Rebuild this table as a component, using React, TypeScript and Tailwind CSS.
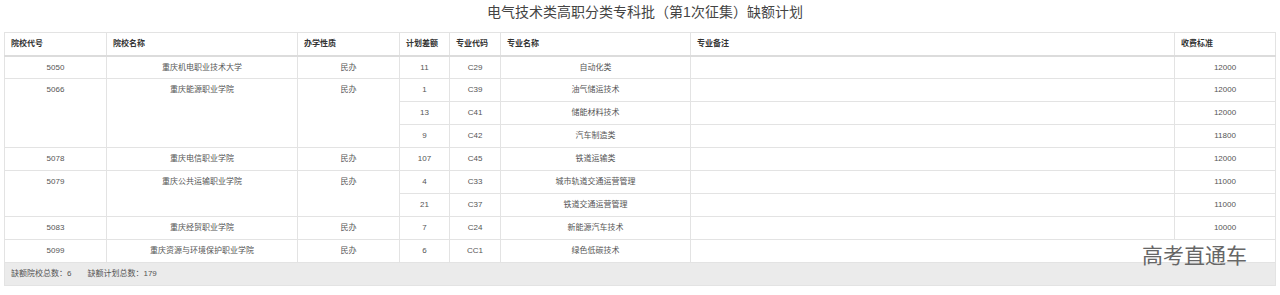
const font = '"Liberation Sans", "Noto Sans CJK SC", sans-serif'

type Major = { gap: string; code: string; name: string; fee: string }
type School = { id: string; name: string; kind: string; majors: Major[] }

const schools: School[] = [
  { id: '5050', name: '重庆机电职业技术大学', kind: '民办', majors: [{ gap: '11', code: 'C29', name: '自动化类', fee: '12000' }] },
  {
    id: '5066',
    name: '重庆能源职业学院',
    kind: '民办',
    majors: [
      { gap: '1', code: 'C39', name: '油气储运技术', fee: '12000' },
      { gap: '13', code: 'C41', name: '储能材料技术', fee: '12000' },
      { gap: '9', code: 'C42', name: '汽车制造类', fee: '11800' },
    ],
  },
  { id: '5078', name: '重庆电信职业学院', kind: '民办', majors: [{ gap: '107', code: 'C45', name: '铁道运输类', fee: '12000' }] },
  {
    id: '5079',
    name: '重庆公共运输职业学院',
    kind: '民办',
    majors: [
      { gap: '4', code: 'C33', name: '城市轨道交通运营管理', fee: '11000' },
      { gap: '21', code: 'C37', name: '铁道交通运营管理', fee: '11000' },
    ],
  },
  { id: '5083', name: '重庆经贸职业学院', kind: '民办', majors: [{ gap: '7', code: 'C24', name: '新能源汽车技术', fee: '10000' }] },
  { id: '5099', name: '重庆资源与环境保护职业学院', kind: '民办', majors: [{ gap: '6', code: 'CC1', name: '绿色低碳技术', fee: '12000' }] },
]

const headers = ['院校代号', '院校名称', '办学性质', '计划差额', '专业代码', '专业名称', '专业备注', '收费标准']
const widths = ['w-[102px]', 'w-[191px]', 'w-[102px]', 'w-[50px]', 'w-[51px]', 'w-[190px]', 'w-[484px]', 'w-[101px]']

const td = 'border border-[#e3e3e3] h-[23px] px-[6px] text-center align-top pt-[6px] leading-[10px]'

export default function App() {
  return (
    <div className="relative w-[1280px] h-[295px] bg-white" style={{ fontFamily: font }}>
      <h1 className="pt-[3px] h-[32px] text-center text-[14px] font-normal leading-[18px] text-[#444] pl-[10px]">
        电气技术类高职分类专科批（第1次征集）缺额计划
      </h1>
      <div className="px-[4px]">
        <table className="w-[1271px] table-fixed border-collapse text-[8px] text-[#555]">
          <colgroup>
            {widths.map((w, i) => (
              <col key={i} className={w} />
            ))}
          </colgroup>
          <thead>
            <tr>
              {headers.map((h) => (
                <th
                  key={h}
                  className="border border-[#e3e3e3] border-b-2 border-b-[#dcdcdc] h-[23px] px-[6px] text-left font-bold text-[#333] leading-[10px]"
                >
                  {h}
                </th>
              ))}
            </tr>
          </thead>
          <tbody>
            {schools.map((s) =>
              s.majors.map((m, i) => (
                <tr key={s.id + m.code}>
                  {i === 0 && (
                    <>
                      <td rowSpan={s.majors.length} className={td}>{s.id}</td>
                      <td rowSpan={s.majors.length} className={td}>{s.name}</td>
                      <td rowSpan={s.majors.length} className={td}>{s.kind}</td>
                    </>
                  )}
                  <td className={td}>{m.gap}</td>
                  <td className={td}>{m.code}</td>
                  <td className={td}>{m.name}</td>
                  <td className={td}></td>
                  <td className={td}>{m.fee}</td>
                </tr>
              )),
            )}
            <tr>
              <td colSpan={8} className="h-[23px] bg-[#ebebeb] border border-[#e3e3e3] px-[6px] text-left leading-[10px]">
                缺额院校总数：6<span className="inline-block w-[16px]" />缺额计划总数：179
              </td>
            </tr>
          </tbody>
        </table>
      </div>
      <div className="absolute left-[1136px] top-[240px] w-[126px] h-[22px] bg-white">
        <span
          className="absolute left-[6px] top-[2px] whitespace-nowrap text-[21px] leading-[24px] text-[#666]"
          style={{ fontFamily: '"Noto Sans CJK SC", sans-serif' }}
        >
          高考直通车
        </span>
      </div>
    </div>
  )
}
